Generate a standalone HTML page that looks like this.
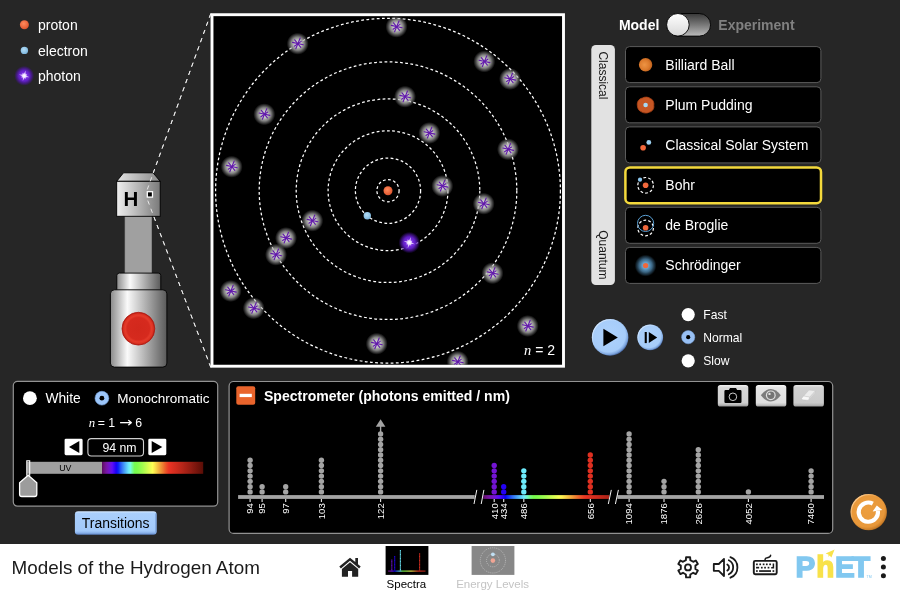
<!DOCTYPE html>
<html lang="en"><head><meta charset="utf-8"><title>Models of the Hydrogen Atom</title>
<style>
html,body{margin:0;padding:0;background:#262626;overflow:hidden}
body{width:900px;height:591px;position:relative;font-family:"Liberation Sans", sans-serif}
svg{position:absolute;left:0;top:0;display:block;will-change:transform}
text{font-family:"Liberation Sans", sans-serif}
.ser{font-family:"Liberation Serif", serif;font-style:italic}
.dj{font-family:"DejaVu Sans",sans-serif}
</style></head><body>
<svg width="900" height="591" viewBox="0 0 900 591">
<defs>
<radialGradient id="gProton" cx="0.42" cy="0.38" r="0.65"><stop offset="0" stop-color="#ff8a5c"/><stop offset="0.6" stop-color="#ee6a40"/><stop offset="1" stop-color="#d8532c"/></radialGradient>
<radialGradient id="gElectron" cx="0.42" cy="0.38" r="0.65"><stop offset="0" stop-color="#b4dcf4"/><stop offset="0.6" stop-color="#92c6e8"/><stop offset="1" stop-color="#78b0d8"/></radialGradient>
<radialGradient id="gPhoton"><stop offset="0" stop-color="#c0a0ff"/><stop offset="0.3" stop-color="#7a2ce2"/><stop offset="0.55" stop-color="#6420cc" stop-opacity="0.95"/><stop offset="0.78" stop-color="#5016a8" stop-opacity="0.6"/><stop offset="1" stop-color="#400e90" stop-opacity="0"/></radialGradient>
<radialGradient id="gGlow"><stop offset="0" stop-color="#fff" stop-opacity="1"/><stop offset="0.5" stop-color="#f0e4ff" stop-opacity="0.75"/><stop offset="1" stop-color="#d0b0ff" stop-opacity="0"/></radialGradient>
<radialGradient id="gUV"><stop offset="0" stop-color="#dcdcdc" stop-opacity="1"/><stop offset="0.35" stop-color="#c8c8c8" stop-opacity="0.95"/><stop offset="0.6" stop-color="#b0b0b0" stop-opacity="0.75"/><stop offset="0.82" stop-color="#a0a0a0" stop-opacity="0.35"/><stop offset="1" stop-color="#909090" stop-opacity="0"/></radialGradient>
<g id="uvPhoton"><circle r="11" fill="url(#gUV)"/><g stroke="#6219ac" stroke-width="1.1" stroke-linecap="round"><line x1="-1.9" y1="5" x2="2.5" y2="-5.7"/><line x1="-5.2" y1="-1.3" x2="5.6" y2="1.1"/><line x1="-3" y1="-3.9" x2="3.1" y2="3.6"/><line x1="-3.4" y1="2.5" x2="3.5" y2="-2.3"/></g></g>
<g id="visPhoton"><circle r="10.8" fill="url(#gPhoton)"/><g fill="#f4ecff" transform="rotate(15)"><polygon points="0,-5.9 1,-1 5.9,0 1,1 0,5.9 -1,1 -5.9,0 -1,-1" opacity="0.8"/><polygon points="0,-3.9 0.9,-0.9 3.9,0 0.9,0.9 0,3.9 -0.9,0.9 -3.9,0 -0.9,-0.9" transform="rotate(45)" opacity="0.7"/></g><circle r="3.4" fill="url(#gGlow)"/></g>
<linearGradient id="gMetal" x1="0" x2="1" y1="0" y2="0"><stop offset="0" stop-color="#8a8a8a"/><stop offset="0.3" stop-color="#fafafa"/><stop offset="1" stop-color="#5a5a5a"/></linearGradient>
<linearGradient id="gBoxFront" x1="0" x2="1" y1="0" y2="0"><stop offset="0" stop-color="#f0f0f0"/><stop offset="1" stop-color="#7a7a7a"/></linearGradient>
<linearGradient id="gBoxTop" x1="0" x2="1" y1="0" y2="0"><stop offset="0" stop-color="#e4e4e4"/><stop offset="1" stop-color="#8a8a8a"/></linearGradient>
<radialGradient id="gRedBtn"><stop offset="0" stop-color="#d2281c"/><stop offset="0.68" stop-color="#d62a1e"/><stop offset="0.8" stop-color="#e43a2a"/><stop offset="0.9" stop-color="#dc3222"/><stop offset="1" stop-color="#b41c12"/></radialGradient>
<linearGradient id="gTrack" x1="0" x2="0" y1="0" y2="1"><stop offset="0" stop-color="#383838"/><stop offset="0.5" stop-color="#787878"/><stop offset="1" stop-color="#bcbcbc"/></linearGradient>
<linearGradient id="gThumb" x1="0" x2="0" y1="0" y2="1"><stop offset="0" stop-color="#ffffff"/><stop offset="1" stop-color="#d8d8d8"/></linearGradient>
<radialGradient id="gBall" cx="0.42" cy="0.5" r="0.62"><stop offset="0" stop-color="#ee9444"/><stop offset="0.6" stop-color="#dc7a2c"/><stop offset="1" stop-color="#b45a18"/></radialGradient>
<radialGradient id="gSchr"><stop offset="0" stop-color="#78b8e4"/><stop offset="0.3" stop-color="#68a8d4" stop-opacity="0.95"/><stop offset="0.6" stop-color="#5088b0" stop-opacity="0.75"/><stop offset="0.85" stop-color="#3a6888" stop-opacity="0.35"/><stop offset="1" stop-color="#2a4a60" stop-opacity="0"/></radialGradient>
<radialGradient id="gBlueBtn" cx="0.45" cy="0.43" r="0.6"><stop offset="0" stop-color="#aed2fc"/><stop offset="0.78" stop-color="#a6ccf9"/><stop offset="0.89" stop-color="#7ea6de"/><stop offset="1" stop-color="#2e4a84"/></radialGradient>
<linearGradient id="gBlueHi" x1="0.1" y1="0.1" x2="0.6" y2="0.6"><stop offset="0" stop-color="#e0eeff" stop-opacity="0.95"/><stop offset="0.6" stop-color="#e0eeff" stop-opacity="0"/><stop offset="1" stop-color="#e0eeff" stop-opacity="0"/></linearGradient>
<linearGradient id="gTrans" x1="0" x2="0" y1="0" y2="1"><stop offset="0" stop-color="#d4e8ff"/><stop offset="0.1" stop-color="#aacffc"/><stop offset="0.84" stop-color="#a2c9fa"/><stop offset="0.93" stop-color="#86aee8"/><stop offset="1" stop-color="#5a80c0"/></linearGradient>
<linearGradient id="gGrayBtn" x1="0" x2="0" y1="0" y2="1"><stop offset="0" stop-color="#f2f2f2"/><stop offset="0.12" stop-color="#d8d8d8"/><stop offset="0.82" stop-color="#d0d0d0"/><stop offset="0.93" stop-color="#b4b4b4"/><stop offset="1" stop-color="#8c8c8c"/></linearGradient>
<linearGradient id="gGrayBtn2" x1="0" x2="0" y1="0" y2="1"><stop offset="0" stop-color="#fafafa"/><stop offset="0.12" stop-color="#e6e6e6"/><stop offset="0.82" stop-color="#dedede"/><stop offset="0.93" stop-color="#c0c0c0"/><stop offset="1" stop-color="#989898"/></linearGradient>
<linearGradient id="gGrayBtn3" x1="0" x2="0" y1="0" y2="1"><stop offset="0" stop-color="#e6e6e6"/><stop offset="0.12" stop-color="#d0d0d0"/><stop offset="0.82" stop-color="#cacaca"/><stop offset="0.93" stop-color="#b4b4b4"/><stop offset="1" stop-color="#9a9a9a"/></linearGradient>
<radialGradient id="gReset" cx="0.45" cy="0.43" r="0.6"><stop offset="0" stop-color="#ec9e40"/><stop offset="0.8" stop-color="#e8983a"/><stop offset="0.93" stop-color="#c87c28"/><stop offset="1" stop-color="#8c500e"/></radialGradient>
<linearGradient id="gResetHi" x1="0.1" y1="0.1" x2="0.6" y2="0.6"><stop offset="0" stop-color="#ffd8a8" stop-opacity="0.9"/><stop offset="0.6" stop-color="#ffd8a8" stop-opacity="0"/><stop offset="1" stop-color="#ffd8a8" stop-opacity="0"/></linearGradient>

<linearGradient id="gSpecSlider" x1="0" x2="1" y1="0" y2="0"><stop offset="0.0000" stop-color="#580d5e"/><stop offset="0.0200" stop-color="#6c127f"/><stop offset="0.0400" stop-color="#76159f"/><stop offset="0.0600" stop-color="#7715bd"/><stop offset="0.0800" stop-color="#7013d9"/><stop offset="0.1000" stop-color="#610ff5"/><stop offset="0.1200" stop-color="#3f07f5"/><stop offset="0.1400" stop-color="#1a01f5"/><stop offset="0.1600" stop-color="#0921f5"/><stop offset="0.1800" stop-color="#2050f5"/><stop offset="0.2000" stop-color="#3579f6"/><stop offset="0.2200" stop-color="#479ef8"/><stop offset="0.2400" stop-color="#58c1f9"/><stop offset="0.2600" stop-color="#69e3fb"/><stop offset="0.2800" stop-color="#75fbea"/><stop offset="0.3000" stop-color="#75fb9c"/><stop offset="0.3200" stop-color="#75fb55"/><stop offset="0.3400" stop-color="#79fb4c"/><stop offset="0.3600" stop-color="#83fb4d"/><stop offset="0.3800" stop-color="#91fc4d"/><stop offset="0.4000" stop-color="#a1fc4e"/><stop offset="0.4200" stop-color="#b3fd4f"/><stop offset="0.4400" stop-color="#c6fd50"/><stop offset="0.4600" stop-color="#d9fe51"/><stop offset="0.4800" stop-color="#ebfe53"/><stop offset="0.5000" stop-color="#ffff54"/><stop offset="0.5200" stop-color="#fbe74d"/><stop offset="0.5400" stop-color="#f7cd45"/><stop offset="0.5600" stop-color="#f3b33e"/><stop offset="0.5800" stop-color="#f09937"/><stop offset="0.6000" stop-color="#ee7f31"/><stop offset="0.6200" stop-color="#ec632b"/><stop offset="0.6400" stop-color="#eb4926"/><stop offset="0.6600" stop-color="#ea3524"/><stop offset="0.6800" stop-color="#e43122"/><stop offset="0.7000" stop-color="#db2f20"/><stop offset="0.7200" stop-color="#d32d1f"/><stop offset="0.7400" stop-color="#cc2b1d"/><stop offset="0.7600" stop-color="#c3291c"/><stop offset="0.7800" stop-color="#bb271a"/><stop offset="0.8000" stop-color="#b32518"/><stop offset="0.8200" stop-color="#aa2217"/><stop offset="0.8400" stop-color="#a22015"/><stop offset="0.8600" stop-color="#991e13"/><stop offset="0.8800" stop-color="#911c12"/><stop offset="0.9000" stop-color="#871910"/><stop offset="0.9200" stop-color="#7e170e"/><stop offset="0.9400" stop-color="#75140c"/><stop offset="0.9600" stop-color="#6c120a"/><stop offset="0.9800" stop-color="#621008"/><stop offset="1.0000" stop-color="#580d07"/></linearGradient>
<linearGradient id="gSpecAxis" x1="0" x2="1" y1="0" y2="0"><stop offset="0.0000" stop-color="#5e0e66"/><stop offset="0.0250" stop-color="#6f1388"/><stop offset="0.0500" stop-color="#7715a8"/><stop offset="0.0750" stop-color="#7615c5"/><stop offset="0.1000" stop-color="#6d12e2"/><stop offset="0.1250" stop-color="#560cf5"/><stop offset="0.1500" stop-color="#3405f5"/><stop offset="0.1750" stop-color="#0a00f5"/><stop offset="0.2000" stop-color="#1233f5"/><stop offset="0.2250" stop-color="#285ff6"/><stop offset="0.2500" stop-color="#3b87f7"/><stop offset="0.2750" stop-color="#4dabf8"/><stop offset="0.3000" stop-color="#5fcffa"/><stop offset="0.3250" stop-color="#6ff0fc"/><stop offset="0.3500" stop-color="#75fbc9"/><stop offset="0.3750" stop-color="#75fb7b"/><stop offset="0.4000" stop-color="#76fb4c"/><stop offset="0.4250" stop-color="#7dfb4c"/><stop offset="0.4500" stop-color="#89fc4d"/><stop offset="0.4750" stop-color="#99fc4e"/><stop offset="0.5000" stop-color="#aafc4e"/><stop offset="0.5250" stop-color="#bdfd50"/><stop offset="0.5500" stop-color="#cffd51"/><stop offset="0.5750" stop-color="#e3fe52"/><stop offset="0.6000" stop-color="#f6ff54"/><stop offset="0.6250" stop-color="#fdf150"/><stop offset="0.6500" stop-color="#f9d849"/><stop offset="0.6750" stop-color="#f5bf41"/><stop offset="0.7000" stop-color="#f2a43a"/><stop offset="0.7250" stop-color="#ef8933"/><stop offset="0.7500" stop-color="#ed6d2d"/><stop offset="0.7750" stop-color="#eb5328"/><stop offset="0.8000" stop-color="#ea3b24"/><stop offset="0.8250" stop-color="#e53222"/><stop offset="0.8500" stop-color="#de3021"/><stop offset="0.8750" stop-color="#d62e1f"/><stop offset="0.9000" stop-color="#cd2c1e"/><stop offset="0.9250" stop-color="#c5291c"/><stop offset="0.9500" stop-color="#bd271a"/><stop offset="0.9750" stop-color="#b42519"/><stop offset="1.0000" stop-color="#ac2317"/></linearGradient>
<clipPath id="clipBox"><rect x="213.4" y="16.1" width="348.7" height="348.7"/></clipPath>
</defs>
<circle cx="24.4" cy="24.7" r="4.5" fill="url(#gProton)"/>
<circle cx="24.4" cy="50.4" r="3.7" fill="url(#gElectron)"/>
<use href="#visPhoton" transform="translate(24.2,75.8) scale(0.93)"/>
<text x="38.0" y="29.8" font-size="14" fill="#ffffff">proton</text>
<text x="38.0" y="55.6" font-size="14" fill="#ffffff">electron</text>
<text x="38.0" y="80.8" font-size="14" fill="#ffffff">photon</text>
<g stroke="#f0f0f0" stroke-width="0.9" stroke-dasharray="4.3 4.4" fill="none"><line x1="210.8" y1="13.6" x2="146.7" y2="191.1"/><line x1="210.8" y1="367.4" x2="146.7" y2="197.7"/></g>
<rect x="125" y="215" width="26.7" height="60" fill="#a0a0a0" stroke="#8a8a8a" stroke-width="0.6"/>
<polygon points="123.5,172.8 153,172.8 160.2,181.3 116.7,181.3" fill="url(#gBoxTop)" stroke="#000" stroke-width="0.9" stroke-linejoin="round"/>
<rect x="116.7" y="181.3" width="43.5" height="35" fill="url(#gBoxFront)" stroke="#000" stroke-width="0.9"/>
<text x="130.9" y="205.8" font-size="20.5" font-weight="bold" fill="#000" text-anchor="middle">H</text>
<rect x="147.3" y="191.7" width="5.2" height="5.4" fill="#000" stroke="#fff" stroke-width="1.3"/>
<g stroke="#f0f0f0" stroke-width="0.9" stroke-dasharray="4.3 4.4" fill="none"><line x1="210.8" y1="13.6" x2="146.7" y2="191.1"/><line x1="210.8" y1="367.4" x2="146.7" y2="197.7"/></g>
<rect x="116.8" y="273.1" width="44" height="20" rx="2.5" fill="url(#gMetal)" stroke="#000" stroke-width="0.9"/>
<rect x="110.4" y="289.8" width="56.5" height="77.3" rx="4" fill="url(#gMetal)" stroke="#000" stroke-width="0.9"/>
<circle cx="138.4" cy="328.7" r="16.4" fill="url(#gRedBtn)" stroke="#b01810" stroke-width="0.8"/>
<rect x="212" y="14.7" width="351.5" height="351.5" fill="#000" stroke="#fff" stroke-width="2.9"/>
<g clip-path="url(#clipBox)">
<g fill="none" stroke="#fff" stroke-width="1.25" stroke-dasharray="2.8 2.4">
<circle cx="388.0" cy="190.7" r="11.1"/>
<circle cx="388.0" cy="190.7" r="32.6"/>
<circle cx="388.0" cy="190.7" r="59.9"/>
<circle cx="388.0" cy="190.7" r="91.8"/>
<circle cx="388.0" cy="190.7" r="128.8"/>
<circle cx="388.0" cy="190.7" r="172.4"/>
</g>
<use href="#uvPhoton" x="396.5" y="26.7"/>
<use href="#uvPhoton" x="297.7" y="43.7"/>
<use href="#uvPhoton" x="484.3" y="61.5"/>
<use href="#uvPhoton" x="510.0" y="79.0"/>
<use href="#uvPhoton" x="405.0" y="96.7"/>
<use href="#uvPhoton" x="264.3" y="114.3"/>
<use href="#uvPhoton" x="429.3" y="133.0"/>
<use href="#uvPhoton" x="508.0" y="149.3"/>
<use href="#uvPhoton" x="231.7" y="166.7"/>
<use href="#uvPhoton" x="442.3" y="186.0"/>
<use href="#uvPhoton" x="483.7" y="203.7"/>
<use href="#uvPhoton" x="312.3" y="220.7"/>
<use href="#uvPhoton" x="286.0" y="238.0"/>
<use href="#uvPhoton" x="276.0" y="254.7"/>
<use href="#uvPhoton" x="492.5" y="273.2"/>
<use href="#uvPhoton" x="230.7" y="291.0"/>
<use href="#uvPhoton" x="253.7" y="308.3"/>
<use href="#uvPhoton" x="527.7" y="326.0"/>
<use href="#uvPhoton" x="376.7" y="343.7"/>
<use href="#uvPhoton" x="457.7" y="361.7"/>
<circle cx="388.0" cy="190.7" r="4.5" fill="url(#gProton)"/>
<circle cx="367.3" cy="215.7" r="3.7" fill="url(#gElectron)"/>
<use href="#visPhoton" x="409.3" y="242.6"/>
<text x="524" y="355.2" font-size="14" fill="#fff"><tspan class="ser" font-size="14.5">n</tspan> = 2</text>
</g>
<text x="618.9" y="29.8" font-size="14" font-weight="bold" fill="#fff">Model</text>
<rect x="666.6" y="13.5" width="44" height="22.6" rx="11.3" fill="url(#gTrack)" stroke="#000" stroke-width="0.9"/>
<rect x="666.6" y="13.5" width="22.6" height="22.6" rx="11.3" fill="url(#gThumb)" stroke="#000" stroke-width="0.9"/>
<text x="718.3" y="29.8" font-size="14" font-weight="bold" fill="#808080">Experiment</text>
<rect x="591.3" y="45" width="23.6" height="240" rx="4.5" fill="#e2e2e2"/>
<text transform="translate(598.6,51.4) rotate(90)" font-size="12" fill="#1a1a1a">Classical</text>
<text transform="translate(598.9,230.2) rotate(90)" font-size="12" fill="#1a1a1a">Quantum</text>
<rect x="625.5" y="46.6" width="195.4" height="36" rx="4" fill="#000" stroke="#5c5c5c" stroke-width="1"/>
<text x="665.3" y="69.5" font-size="14" fill="#fff">Billiard Ball</text>
<rect x="625.5" y="86.8" width="195.4" height="36" rx="4" fill="#000" stroke="#5c5c5c" stroke-width="1"/>
<text x="665.3" y="109.7" font-size="14" fill="#fff">Plum Pudding</text>
<rect x="625.5" y="126.9" width="195.4" height="36" rx="4" fill="#000" stroke="#5c5c5c" stroke-width="1"/>
<text x="665.3" y="149.8" font-size="14" fill="#fff">Classical Solar System</text>
<rect x="625.4" y="167.4" width="195.6" height="35.8" rx="4.5" fill="#000" stroke="#f4d93c" stroke-width="2.5"/>
<text x="665.3" y="190.0" font-size="14" fill="#fff">Bohr</text>
<rect x="625.5" y="207.3" width="195.4" height="36" rx="4" fill="#000" stroke="#5c5c5c" stroke-width="1"/>
<text x="665.3" y="230.2" font-size="14" fill="#fff">de Broglie</text>
<rect x="625.5" y="247.4" width="195.4" height="36" rx="4" fill="#000" stroke="#5c5c5c" stroke-width="1"/>
<text x="665.3" y="270.3" font-size="14" fill="#fff">Schrödinger</text>
<circle cx="645.6" cy="64.8" r="6.7" fill="url(#gBall)"/>
<g transform="translate(645.6,105.0)"><path d="M-8.3,0.4 C-8.8,-3.4 -6.4,-6.4 -3.2,-6.9 C-1,-8.4 2.6,-8.2 4.6,-6.6 C7.4,-5.6 8.8,-2.6 8.2,0.6 C8.8,3.6 6.8,6.6 3.6,7.2 C1.2,8.6 -2.6,8.2 -4.6,6.6 C-7,5.6 -8.2,3 -8.3,0.4 Z" fill="#c65624" stroke="#a84014" stroke-width="0.8"/><circle r="2.3" fill="#a8d8f4"/></g>
<circle cx="643.1" cy="147.8" r="2.8" fill="#f0683c"/><circle cx="648.8" cy="142.4" r="2.4" fill="#9cd0f0"/>
<circle cx="645.6" cy="185.3" r="7.8" fill="none" stroke="#fff" stroke-width="1.2" stroke-dasharray="2.8 2.1"/>
<circle cx="645.6" cy="185.3" r="2.8" fill="#f0683c"/><circle cx="640" cy="179.7" r="2.1" fill="#8cc8f0"/>
<circle cx="645.6" cy="228.0" r="7.8" fill="none" stroke="#fff" stroke-width="1.2" stroke-dasharray="2.8 2.1"/>
<circle cx="645.6" cy="223.4" r="8.1" fill="none" stroke="#5aa0d4" stroke-width="1"/>
<circle cx="645.6" cy="227.8" r="2.8" fill="#f0683c"/>
<circle cx="645.6" cy="265.6" r="11" fill="url(#gSchr)"/><circle cx="645.6" cy="265.6" r="2.7" fill="#f0683c"/>
<circle cx="610.1" cy="337.4" r="18.3" fill="url(#gBlueBtn)"/><circle cx="610.1" cy="337.4" r="17.6" fill="none" stroke="url(#gBlueHi)" stroke-width="1.1"/>
<polygon points="603.4,328.7 603.4,346.3 617.8,337.5" fill="#000"/>
<circle cx="650.2" cy="337.4" r="12.9" fill="url(#gBlueBtn)"/><circle cx="650.2" cy="337.4" r="12.3" fill="none" stroke="url(#gBlueHi)" stroke-width="1"/>
<rect x="644.7" y="332" width="2.1" height="11.1" fill="#000"/><polygon points="648.8,332 648.8,343.1 657.2,337.5" fill="#000"/>
<circle cx="688.2" cy="314.6" r="6.6" fill="#fff"/>
<text x="703.3" y="318.9" font-size="12.1" fill="#fff">Fast</text>
<circle cx="688.2" cy="337.2" r="6.6" fill="#98c0f4" stroke="#7aa6e0" stroke-width="0.5"/><circle cx="688.2" cy="337.2" r="2.1" fill="#000"/>
<text x="703.3" y="341.5" font-size="12.1" fill="#fff">Normal</text>
<circle cx="688.2" cy="360.8" r="6.6" fill="#fff"/>
<text x="703.3" y="365.1" font-size="12.1" fill="#fff">Slow</text>
<rect x="13.3" y="381.4" width="204.4" height="124.8" rx="4.2" fill="#000" stroke="#929292" stroke-width="1.2"/>
<circle cx="29.9" cy="398.2" r="6.9" fill="#fff"/>
<text x="45.4" y="403.1" font-size="13.8" fill="#fff">White</text>
<circle cx="101.9" cy="398.2" r="6.9" fill="#9cc6fa" stroke="#7aa6e0" stroke-width="0.6"/><circle cx="101.9" cy="398.2" r="2.4" fill="#000"/>
<text x="117.2" y="403.1" font-size="13.5" fill="#fff">Monochromatic</text>
<text x="88.7" y="426.7" font-size="12.8" fill="#fff" class="ser">n</text><text x="97.7" y="426.7" font-size="12.3" fill="#fff">= 1</text><text transform="translate(118.9,426.9) scale(1.2,1)" class="dj" font-size="13.4" fill="#fff">→</text><text x="135.2" y="426.7" font-size="12.3" fill="#fff">6</text>
<rect x="64.6" y="438.7" width="18" height="16.5" rx="1.4" fill="#fff"/><polygon points="79.3,441.1 79.3,452.9 69,447" fill="#000"/>
<rect x="87.9" y="438.6" width="55.6" height="17.4" rx="3.4" fill="#000" stroke="#d0d0d0" stroke-width="1.1"/>
<text x="136.6" y="451.7" font-size="12.3" fill="#fff" text-anchor="end">94 nm</text>
<rect x="148.3" y="438.7" width="18" height="16.5" rx="1.4" fill="#fff"/><polygon points="151.7,441.1 151.7,452.9 162.3,447" fill="#000"/>
<rect x="27.1" y="461.8" width="75" height="12" fill="#a0a0a0"/>
<rect x="102" y="461.8" width="101.2" height="12" fill="url(#gSpecSlider)"/>
<text x="65.3" y="471" font-size="8.8" fill="#000" text-anchor="middle">UV</text>
<rect x="26.8" y="460.8" width="2.9" height="14.4" fill="none" stroke="#fff" stroke-width="1.1"/>
<path d="M28.2,475.3 L36.8,482.8 L36.8,494.3 Q36.8,496.5 34.6,496.5 L21.8,496.5 Q19.6,496.5 19.6,494.3 L19.6,482.8 Z" fill="#9c9c9c" stroke="#fff" stroke-width="1.3" stroke-linejoin="round"/>
<rect x="74.9" y="511.2" width="81.7" height="23.5" rx="3.2" fill="url(#gTrans)"/>
<path d="M155.9,513.5 L155.9,532.5" stroke="#6c92d0" stroke-width="1.2" fill="none" opacity="0.8"/>
<text x="115.7" y="527.8" font-size="13.95" fill="#000" text-anchor="middle">Transitions</text>
<rect x="229.1" y="381.5" width="603.6" height="151.9" rx="4.5" fill="#000" stroke="#929292" stroke-width="1.2"/>
<rect x="236.3" y="386.3" width="18.9" height="18.4" rx="2" fill="#e9642c"/><rect x="239.6" y="393.8" width="12.2" height="3.3" fill="#fff"/>
<text x="264" y="400.7" font-size="14.06" font-weight="bold" fill="#fff">Spectrometer (photons emitted / nm)</text>
<rect x="238.1" y="495.1" width="236.6" height="3.8" fill="#a4a4a4"/>
<rect x="483.2" y="495.1" width="125.9" height="3.8" fill="url(#gSpecAxis)"/>
<rect x="617.4" y="495.1" width="206.6" height="3.8" fill="#a4a4a4"/>
<g stroke="#fff" stroke-width="0.95"><line x1="476.8" y1="489.9" x2="474" y2="504"/><line x1="483.9" y1="489.9" x2="481.2" y2="504"/><line x1="611.3" y1="489.9" x2="608.3" y2="504"/><line x1="618.4" y1="489.9" x2="615.4" y2="504"/></g>
<g fill="#a4a4a4">
<circle cx="250.1" cy="491.90" r="2.68"/>
<circle cx="250.1" cy="486.63" r="2.68"/>
<circle cx="250.1" cy="481.36" r="2.68"/>
<circle cx="250.1" cy="476.09" r="2.68"/>
<circle cx="250.1" cy="470.82" r="2.68"/>
<circle cx="250.1" cy="465.55" r="2.68"/>
<circle cx="250.1" cy="460.28" r="2.68"/>
</g>
<line x1="250.1" y1="498.9" x2="250.1" y2="502" stroke="#e8e8e8" stroke-width="1.1"/>
<text transform="translate(253.4,503.2) rotate(-90)" font-size="9.6" fill="#fff" text-anchor="end">94</text>
<g fill="#a4a4a4">
<circle cx="262.1" cy="491.90" r="2.68"/>
<circle cx="262.1" cy="486.63" r="2.68"/>
</g>
<line x1="262.1" y1="498.9" x2="262.1" y2="502" stroke="#e8e8e8" stroke-width="1.1"/>
<text transform="translate(265.4,503.2) rotate(-90)" font-size="9.6" fill="#fff" text-anchor="end">95</text>
<g fill="#a4a4a4">
<circle cx="285.7" cy="491.90" r="2.68"/>
<circle cx="285.7" cy="486.63" r="2.68"/>
</g>
<line x1="285.7" y1="498.9" x2="285.7" y2="502" stroke="#e8e8e8" stroke-width="1.1"/>
<text transform="translate(289.0,503.2) rotate(-90)" font-size="9.6" fill="#fff" text-anchor="end">97</text>
<g fill="#a4a4a4">
<circle cx="321.4" cy="491.90" r="2.68"/>
<circle cx="321.4" cy="486.63" r="2.68"/>
<circle cx="321.4" cy="481.36" r="2.68"/>
<circle cx="321.4" cy="476.09" r="2.68"/>
<circle cx="321.4" cy="470.82" r="2.68"/>
<circle cx="321.4" cy="465.55" r="2.68"/>
<circle cx="321.4" cy="460.28" r="2.68"/>
</g>
<line x1="321.4" y1="498.9" x2="321.4" y2="502" stroke="#e8e8e8" stroke-width="1.1"/>
<text transform="translate(324.7,503.2) rotate(-90)" font-size="9.6" fill="#fff" text-anchor="end">103</text>
<g fill="#a4a4a4">
<circle cx="380.6" cy="491.90" r="2.68"/>
<circle cx="380.6" cy="486.63" r="2.68"/>
<circle cx="380.6" cy="481.36" r="2.68"/>
<circle cx="380.6" cy="476.09" r="2.68"/>
<circle cx="380.6" cy="470.82" r="2.68"/>
<circle cx="380.6" cy="465.55" r="2.68"/>
<circle cx="380.6" cy="460.28" r="2.68"/>
<circle cx="380.6" cy="455.01" r="2.68"/>
<circle cx="380.6" cy="449.74" r="2.68"/>
<circle cx="380.6" cy="444.47" r="2.68"/>
<circle cx="380.6" cy="439.20" r="2.68"/>
<circle cx="380.6" cy="433.93" r="2.68"/>
</g>
<line x1="380.6" y1="433.8" x2="380.6" y2="426" stroke="#a4a4a4" stroke-width="1.4"/>
<polygon points="380.6,419.2 375.8,426.8 385.4,426.8" fill="#a4a4a4"/>
<line x1="380.6" y1="498.9" x2="380.6" y2="502" stroke="#e8e8e8" stroke-width="1.1"/>
<text transform="translate(383.9,503.2) rotate(-90)" font-size="9.6" fill="#fff" text-anchor="end">122</text>
<g fill="#7314d3">
<circle cx="494.2" cy="491.90" r="2.68"/>
<circle cx="494.2" cy="486.63" r="2.68"/>
<circle cx="494.2" cy="481.36" r="2.68"/>
<circle cx="494.2" cy="476.09" r="2.68"/>
<circle cx="494.2" cy="470.82" r="2.68"/>
<circle cx="494.2" cy="465.55" r="2.68"/>
</g>
<line x1="494.2" y1="498.9" x2="494.2" y2="502" stroke="#e8e8e8" stroke-width="1.1"/>
<text transform="translate(497.5,503.2) rotate(-90)" font-size="9.6" fill="#fff" text-anchor="end">410</text>
<g fill="#2402f5">
<circle cx="503.7" cy="491.90" r="2.68"/>
<circle cx="503.7" cy="486.63" r="2.68"/>
</g>
<line x1="503.7" y1="498.9" x2="503.7" y2="502" stroke="#e8e8e8" stroke-width="1.1"/>
<text transform="translate(507.0,503.2) rotate(-90)" font-size="9.6" fill="#fff" text-anchor="end">434</text>
<g fill="#6debfc">
<circle cx="523.8" cy="491.90" r="2.68"/>
<circle cx="523.8" cy="486.63" r="2.68"/>
<circle cx="523.8" cy="481.36" r="2.68"/>
<circle cx="523.8" cy="476.09" r="2.68"/>
<circle cx="523.8" cy="470.82" r="2.68"/>
</g>
<line x1="523.8" y1="498.9" x2="523.8" y2="502" stroke="#e8e8e8" stroke-width="1.1"/>
<text transform="translate(527.1,503.2) rotate(-90)" font-size="9.6" fill="#fff" text-anchor="end">486</text>
<g fill="#df3021">
<circle cx="590.3" cy="491.90" r="2.68"/>
<circle cx="590.3" cy="486.63" r="2.68"/>
<circle cx="590.3" cy="481.36" r="2.68"/>
<circle cx="590.3" cy="476.09" r="2.68"/>
<circle cx="590.3" cy="470.82" r="2.68"/>
<circle cx="590.3" cy="465.55" r="2.68"/>
<circle cx="590.3" cy="460.28" r="2.68"/>
<circle cx="590.3" cy="455.01" r="2.68"/>
</g>
<line x1="590.3" y1="498.9" x2="590.3" y2="502" stroke="#e8e8e8" stroke-width="1.1"/>
<text transform="translate(593.6,503.2) rotate(-90)" font-size="9.6" fill="#fff" text-anchor="end">656</text>
<g fill="#a4a4a4">
<circle cx="629.1" cy="491.90" r="2.68"/>
<circle cx="629.1" cy="486.63" r="2.68"/>
<circle cx="629.1" cy="481.36" r="2.68"/>
<circle cx="629.1" cy="476.09" r="2.68"/>
<circle cx="629.1" cy="470.82" r="2.68"/>
<circle cx="629.1" cy="465.55" r="2.68"/>
<circle cx="629.1" cy="460.28" r="2.68"/>
<circle cx="629.1" cy="455.01" r="2.68"/>
<circle cx="629.1" cy="449.74" r="2.68"/>
<circle cx="629.1" cy="444.47" r="2.68"/>
<circle cx="629.1" cy="439.20" r="2.68"/>
<circle cx="629.1" cy="433.93" r="2.68"/>
</g>
<line x1="629.1" y1="498.9" x2="629.1" y2="502" stroke="#e8e8e8" stroke-width="1.1"/>
<text transform="translate(632.4,503.2) rotate(-90)" font-size="9.6" fill="#fff" text-anchor="end">1094</text>
<g fill="#a4a4a4">
<circle cx="664.0" cy="491.90" r="2.68"/>
<circle cx="664.0" cy="486.63" r="2.68"/>
<circle cx="664.0" cy="481.36" r="2.68"/>
</g>
<line x1="664.0" y1="498.9" x2="664.0" y2="502" stroke="#e8e8e8" stroke-width="1.1"/>
<text transform="translate(667.3,503.2) rotate(-90)" font-size="9.6" fill="#fff" text-anchor="end">1876</text>
<g fill="#a4a4a4">
<circle cx="698.3" cy="491.90" r="2.68"/>
<circle cx="698.3" cy="486.63" r="2.68"/>
<circle cx="698.3" cy="481.36" r="2.68"/>
<circle cx="698.3" cy="476.09" r="2.68"/>
<circle cx="698.3" cy="470.82" r="2.68"/>
<circle cx="698.3" cy="465.55" r="2.68"/>
<circle cx="698.3" cy="460.28" r="2.68"/>
<circle cx="698.3" cy="455.01" r="2.68"/>
<circle cx="698.3" cy="449.74" r="2.68"/>
</g>
<line x1="698.3" y1="498.9" x2="698.3" y2="502" stroke="#e8e8e8" stroke-width="1.1"/>
<text transform="translate(701.6,503.2) rotate(-90)" font-size="9.6" fill="#fff" text-anchor="end">2626</text>
<g fill="#a4a4a4">
<circle cx="748.4" cy="491.90" r="2.68"/>
</g>
<line x1="748.4" y1="498.9" x2="748.4" y2="502" stroke="#e8e8e8" stroke-width="1.1"/>
<text transform="translate(751.7,503.2) rotate(-90)" font-size="9.6" fill="#fff" text-anchor="end">4052</text>
<g fill="#a4a4a4">
<circle cx="811.1" cy="491.90" r="2.68"/>
<circle cx="811.1" cy="486.63" r="2.68"/>
<circle cx="811.1" cy="481.36" r="2.68"/>
<circle cx="811.1" cy="476.09" r="2.68"/>
<circle cx="811.1" cy="470.82" r="2.68"/>
</g>
<line x1="811.1" y1="498.9" x2="811.1" y2="502" stroke="#e8e8e8" stroke-width="1.1"/>
<text transform="translate(814.4,503.2) rotate(-90)" font-size="9.6" fill="#fff" text-anchor="end">7460</text>
<rect x="717.8" y="385" width="30.5" height="21.6" rx="2.6" fill="url(#gGrayBtn)"/>
<rect x="755.8" y="385" width="30.5" height="21.6" rx="2.6" fill="url(#gGrayBtn2)"/>
<rect x="793.4" y="385" width="30.5" height="21.6" rx="2.6" fill="url(#gGrayBtn3)"/>
<g transform="translate(733,396.4)"><path d="M-7.4,-6.3 H-4.1 L-3,-8.5 H3 L4.1,-6.3 H7.3 q1.2,0 1.2,1.2 V5.4 q0,1.2 -1.2,1.2 H-7.4 q-1.2,0 -1.2,-1.2 V-5.1 q0,-1.2 1.2,-1.2 z" fill="#000"/><circle cx="-0.1" cy="0.4" r="3.8" fill="#000" stroke="#d4d4d4" stroke-width="0.95"/></g>
<g transform="translate(770.8,395.3)"><path d="M-10,0 Q-5.2,-6.2 0,-6.2 Q5.2,-6.2 10,0 Q5.2,6.2 0,6.2 Q-5.2,6.2 -10,0 Z" fill="#7c7c7c"/><circle r="4.9" fill="#e0e0e0"/><circle r="3.7" fill="#747474"/><circle cx="-1.3" cy="-1.4" r="1.2" fill="#e0e0e0"/></g>
<g stroke="#bcbcbc" stroke-width="0.35" stroke-linejoin="round"><polygon points="803.7,396 809,390.1 815.6,390.8 809.7,397.2" fill="#ececec"/><polygon points="809.7,397.2 815.6,390.8 815.4,392.9 808.4,400.2" fill="#dedede"/><polygon points="801.6,398.6 803.7,396 809.7,397.2 808.4,400.2 802.6,399.8" fill="#f8f8f8"/></g>
<circle cx="868.7" cy="512.1" r="18.2" fill="url(#gReset)"/>
<circle cx="868.7" cy="512.1" r="17.5" fill="none" stroke="url(#gResetHi)" stroke-width="1.2"/>
<path d="M 872.8 503.6 A 9.65 9.65 0 1 0 877.9 510.8" fill="none" stroke="#fff" stroke-width="4.1"/><polygon points="876.8,505.4 872.6,511.5 882.4,509.9" fill="#fff"/>
<rect x="0" y="544" width="900" height="47" fill="#fff"/>
<text x="11.6" y="574" font-size="18.85" fill="#1a1a1a">Models of the Hydrogen Atom</text>
<g fill="#222"><path d="M350,557.8 L339.3,566.4 L340.9,568.5 L350,560.8 L359.1,568.5 L360.7,566.4 L358,564.2 L358,558.1 L355.3,558.1 L355.3,562.1 Z"/><path d="M350,562.3 L341.9,569 L341.9,576.7 L348,576.7 L348,570.9 L352.1,570.9 L352.1,576.7 L358.2,576.7 L358.2,569 Z"/></g>
<rect x="385.6" y="546" width="42.8" height="28.9" fill="#000"/>
<rect x="388" y="570.5" width="37.5" height="1.2" fill="url(#gSpecAxis)" opacity="0.9"/>
<line x1="391.8" y1="559.6" x2="391.8" y2="570.8" stroke="#7314d3" stroke-width="1.15" stroke-dasharray="1.1 0.25" opacity="0.92"/>
<line x1="394.7" y1="556.0" x2="394.7" y2="570.8" stroke="#2402f5" stroke-width="1.15" stroke-dasharray="1.1 0.25" opacity="0.92"/>
<line x1="400.4" y1="550.0" x2="400.4" y2="570.8" stroke="#6debfc" stroke-width="1.15" stroke-dasharray="1.1 0.25" opacity="0.92"/>
<line x1="419.6" y1="553.3" x2="419.6" y2="570.8" stroke="#df3021" stroke-width="1.15" stroke-dasharray="1.1 0.25" opacity="0.92"/>
<text x="406.4" y="587.8" font-size="11.5" fill="#000" text-anchor="middle">Spectra</text>
<rect x="471.6" y="546" width="42.8" height="28.9" fill="#878787"/>
<g fill="none" stroke="#d0d0d0" stroke-width="0.7" stroke-dasharray="0.9 1.1"><circle cx="492.9" cy="560.4" r="12.6"/><circle cx="492.9" cy="560.4" r="6.4"/></g>
<circle cx="492.9" cy="560.6" r="2.3" fill="#f0a594"/><circle cx="492.9" cy="554.3" r="1.9" fill="#c0e0f4"/>
<text x="492.6" y="587.8" font-size="11.5" fill="#c4c4c4" text-anchor="middle">Energy Levels</text>
<polygon points="685.88,560.13 686.05,557.21 690.15,557.21 690.32,560.13 693.20,561.80 695.82,560.48 697.87,564.02 695.41,565.64 695.41,568.96 697.87,570.58 695.82,574.12 693.20,572.80 690.32,574.47 690.15,577.39 686.05,577.39 685.88,574.47 683.00,572.80 680.38,574.12 678.33,570.58 680.79,568.96 680.79,565.64 678.33,564.02 680.38,560.48 683.00,561.80" fill="none" stroke="#1a1a1a" stroke-width="1.9" stroke-linejoin="round"/>
<circle cx="688" cy="567.4" r="3" fill="none" stroke="#1a1a1a" stroke-width="1.8"/>
<g fill="none" stroke="#1a1a1a" stroke-width="1.8" stroke-linejoin="round" stroke-linecap="round"><path d="M713.8,564 L718.8,564 L724,558.9 L724,576 L718.8,570.8 L713.8,570.8 Z"/><path d="M727.3,564.4 A3.6,3.6 0 0 1 727.3,570.6"/><path d="M728.8,560.3 A7.8,7.8 0 0 1 728.8,574.3"/><path d="M730.4,557.2 A11,11 0 0 1 730.4,577.7"/></g>
<g stroke="#1a1a1a" fill="none"><rect x="753.8" y="560.9" width="22.9" height="13.3" rx="1.4" stroke-width="1.9"/><path d="M765.1,560.6 L765.1,559.2 C765.1,557 770.6,558.6 770.6,555.2" stroke-width="1.5" stroke-linecap="round"/><path d="M773.4,563.4 L773.4,567.7 L771.2,567.7" stroke-width="1.5"/></g><g fill="#1a1a1a" stroke="none"><rect x="756.05" y="563.5" width="1.7" height="1.7"/><rect x="759.35" y="563.5" width="1.7" height="1.7"/><rect x="762.75" y="563.5" width="1.7" height="1.7"/><rect x="765.95" y="563.5" width="1.7" height="1.7"/><rect x="769.25" y="563.5" width="1.7" height="1.7"/><rect x="756.05" y="566.8" width="3.1" height="1.7"/><rect x="760.95" y="566.8" width="1.7" height="1.7"/><rect x="764.20" y="566.8" width="1.7" height="1.7"/><rect x="767.65" y="566.8" width="1.7" height="1.7"/><rect x="756.05" y="570.2" width="1.7" height="1.7"/><rect x="759.1" y="570.2" width="11.9" height="1.7"/><rect x="772.55" y="570.2" width="1.7" height="1.7"/></g>
<g font-size="29.6" font-weight="bold" stroke-width="1.5" stroke-linejoin="miter"><text x="795.6" y="576.8" fill="#82c8f0" stroke="#82c8f0">P</text><text x="816.2" y="576.8" fill="#f8e24a" stroke="#f8e24a">h</text><text x="834.9" y="576.8" fill="#82c8f0" stroke="#82c8f0">E</text><text x="852" y="576.8" fill="#82c8f0" stroke="#82c8f0">T</text></g>
<polygon points="825.6,553.6 834.6,549.4 831.4,557.6 829.6,555.4 828.6,557 828.4,554.6" fill="#f8e24a"/>
<text x="866.6" y="578.3" font-size="3.6" fill="#82c8f0">TM</text>
<g fill="#1a1a1a"><circle cx="883.4" cy="558.4" r="2.5"/><circle cx="883.4" cy="567" r="2.5"/><circle cx="883.4" cy="575.7" r="2.5"/></g>
</svg></body></html>
